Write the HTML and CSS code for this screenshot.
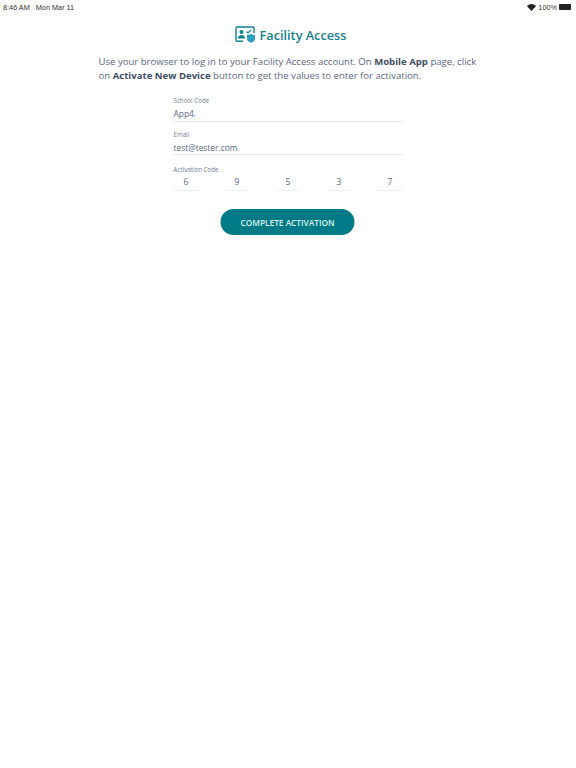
FILE: index.html
```html
<!DOCTYPE html>
<html lang="en">
<head>
    <meta charset="UTF-8" />
    <meta name="viewport" content="width=device-width, initial-scale=1.0"/>
    <title>Facility Access</title>
    <link rel="stylesheet" href="styles.css">
</head>
<body>

<!-- Status bar -->
<div class="status-bar">
    <div class="status-left">
        <span>8:46 AM</span>
        <span>Mon Mar 11</span>
    </div>
    <div class="status-right">
        <svg class="wifi" width="9" height="7" viewBox="0 0 18 14"><path d="M9 14 L0 4.5 C5 -1.2 13 -1.2 18 4.5 Z" fill="#222"/></svg>
        <span>100%</span>
        <div class="battery"></div>
    </div>
</div>

<!-- Main Content -->
<main>
    <div class="title-row">
        <svg class="title-icon" width="21" height="17" viewBox="0 0 21 17" fill="none">
            <path d="M8 15.2H2.2a1.2 1.2 0 0 1-1.2-1.2V2.2A1.2 1.2 0 0 1 2.2 1h15.6A1.2 1.2 0 0 1 19 2.2V7" stroke="#0e7f8a" stroke-width="1.4"/>
            <circle cx="6.5" cy="6" r="2" fill="#0e7f8a"/>
            <path d="M3 12.5c0-2.2 1.6-3.4 3.5-3.4s3.500 1.200 3.500 3.400z" fill="#0e7f8a"/>
            <path d="M11.500 5.500l1.500 1.500 3-3.200" stroke="#0e7f8a" stroke-width="1.200"/>
            <path d="M16 8l4 1.300v3.500c0 2-1.800 3.300-4 4-2.200-.7-4-2-4-4V9.300z" fill="#2a9fc0"/>
        </svg>
        <h1>Facility Access</h1>
    </div>

    <p class="intro">Use your browser to log in to your Facility Access account. On <strong>Mobile App</strong> page, click on <strong>Activate New Device</strong> button to get the values to enter for activation.</p>

    <form class="form">
        <div class="field">
            <label>School Code</label>
            <div class="value">App4<span class="caret">›</span></div>
        </div>
        <div class="field">
            <label>Email</label>
            <div class="value">test@tester.com</div>
        </div>
        <div class="code-field">
            <label>Activation Code</label>
            <div class="code-row">
                <div class="digit">6</div>
                <div class="digit">9</div>
                <div class="digit">5</div>
                <div class="digit">3</div>
                <div class="digit">7</div>
            </div>
        </div>
        <button type="button" class="submit">COMPLETE ACTIVATION</button>
    </form>
</main>

</body>
</html>
```

FILE: styles.css
```css
body {
    font-family: 'Open Sans', sans-serif;
    background: #fff;
    color: #4a5568;
    margin: 0;
    padding: 0;
}

.status-bar {
    display: flex;
    justify-content: space-between;
    align-items: center;
    height: 14px;
    padding: 0 5px 0 3px;
    font-family: 'Liberation Sans', sans-serif;
    font-size: 7.3px;
    color: #333;
}

.status-left {
    display: flex;
    gap: 6px;
}

.status-right {
    display: flex;
    align-items: center;
    gap: 2px;
}

.battery {
    width: 12px;
    height: 6px;
    background: #222;
    border-radius: 1px;
}

main {
    width: 380px;
    margin: 0 auto;
    padding-left: 1px;
}

.title-row {
    display: flex;
    justify-content: center;
    align-items: center;
    gap: 4px;
    margin-top: 11px;
    height: 19px;
    padding-left: 4px;
}

h1 {
    margin: 0;
    font-size: 12.7px;
    font-weight: 600;
    color: #16808c;
}

.intro {
    margin: 11px 0 0;
    font-size: 9.58px;
    line-height: 14px;
    color: #5c6780;
}

.intro strong {
    color: #424d66;
}

.form {
    width: 229px;
    margin: 13px auto 0;
    transform: translateX(-0.5px);
}

label {
    display: block;
    font-size: 6.2px;
    line-height: 9px;
    color: #727c92;
}

.field {
    height: 34px;
}

.value {
    font-size: 8.4px;
    line-height: 10px;
    padding-top: 4px;
    padding-bottom: 1px;
    border-bottom: 1px solid #e6eaf0;
    color: #5c6780;
}

.caret {
    font-size: 6px;
}

.code-field {
    margin-top: 1px;
}

.code-row {
    display: flex;
    justify-content: space-between;
    margin-top: 1px;
}

.digit {
    width: 25px;
    text-align: center;
    font-size: 8.4px;
    line-height: 14px;
    padding-bottom: 1px;
    border-bottom: 1px solid #ecf0f4;
    color: #5c6780;
}

.submit {
    display: block;
    width: 134px;
    height: 26px;
    margin: 18px 0 0 47px;
    border: none;
    border-radius: 13px;
    background: #007b85;
    color: #dff0f1;
    font-family: 'Open Sans', sans-serif;
    font-size: 8.3px;
    font-weight: 600;
    padding: 0;
}
```
